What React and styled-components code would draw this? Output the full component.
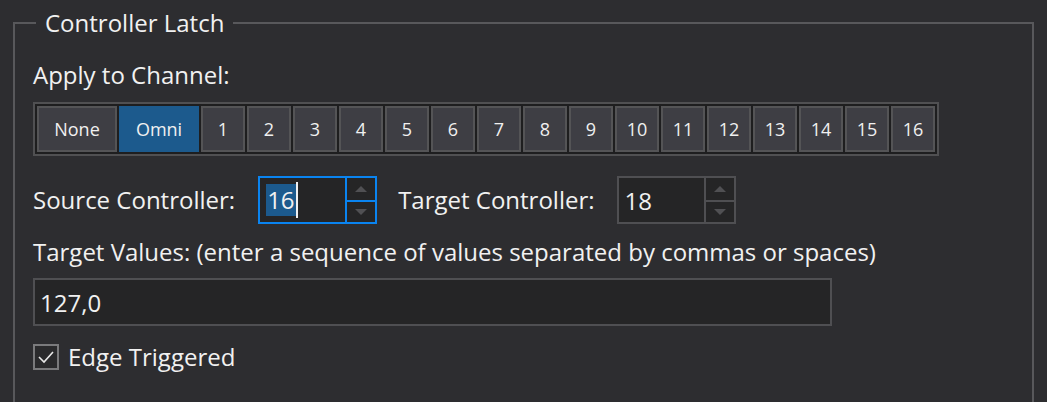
import React from "react";
import styled, { createGlobalStyle } from "styled-components";

const GlobalStyle = createGlobalStyle`
  html, body {
    margin: 0;
    padding: 0;
    background: #2d2d30;
    overflow: hidden;
  }
  body {
    font-family: "Open Sans", "Noto Sans", sans-serif;
    color: #f1f1f1;
  }
`;

const Panel = styled.fieldset`
  margin: 9px 0 0 13px;
  width: 1021px;
  height: 393px;
  box-sizing: border-box;
  border: 2px solid #58585b;
  border-bottom: none;
  padding: 24px 0 0 18px;
  display: flex;
  flex-direction: column;
  align-items: flex-start;
`;

const Legend = styled.legend`
  margin-left: 3px;
  padding: 0 9px;
  font-size: 24px;
  line-height: 28px;
`;

const Label = styled.div`
  font-size: 24px;
  line-height: 28px;
  white-space: nowrap;
  margin-top: ${(p) => p.$top || 0}px;
  margin-left: ${(p) => p.$left || 0}px;
`;

const ChannelGroup = styled.div`
  margin-top: 13px;
  display: flex;
  gap: 2px;
  padding: 2px;
  border: 2px solid #505052;
  background: #1e1e1f;
`;

const ChannelButton = styled.button`
  width: ${(p) => (p.$wide ? 80 : 44)}px;
  height: 46px;
  box-sizing: border-box;
  border: 2px solid ${(p) => (p.$active ? "#1c5a8d" : "#545456")};
  background: ${(p) => (p.$active ? "#1c5a8d" : "#3e3e44")};
  color: #f0f0f0;
  font-family: inherit;
  font-size: 18px;
  padding: 0;
  cursor: pointer;
`;

const Row = styled.div`
  margin-top: 20px;
  display: flex;
  align-items: center;
`;

const Spinner = styled.div`
  margin-left: ${(p) => p.$gap}px;
  width: 119px;
  height: 48px;
  box-sizing: border-box;
  border: 2px solid ${(p) => (p.$focused ? "#0a84f0" : "#4f4f52")};
  background: #252526;
  display: grid;
  grid-template-columns: 1fr 28px;
`;

const SpinValue = styled.div`
  border-right: 2px solid ${(p) => (p.$focused ? "#0a84f0" : "#4f4f52")};
  padding-left: 6px;
  display: flex;
  align-items: center;
  font-size: 24px;
`;

const Selected = styled.span`
  background: #1c5a8d;
  line-height: 32px;
  padding: 0 1px;
`;

const Caret = styled.span`
  width: 2px;
  height: 36px;
  background: #f0f0f0;
`;

const Arrows = styled.div`
  display: grid;
  grid-template-rows: 1fr 1fr;
`;

const Arrow = styled.div`
  display: flex;
  align-items: center;
  justify-content: center;
  border-top: ${(p) =>
    p.$down ? `2px solid ${p.$focused ? "#0a84f0" : "#4f4f52"}` : "none"};
`;

const TextBox = styled.div`
  margin-top: 12px;
  width: 799px;
  height: 48px;
  box-sizing: border-box;
  border: 2px solid #4f4f52;
  background: #252526;
  padding-left: 5px;
  display: flex;
  align-items: center;
  font-size: 24px;
`;

const CheckRow = styled.label`
  margin-top: 18px;
  display: flex;
  align-items: center;
  gap: 9px;
  font-size: 24px;
  line-height: 26px;
`;

const Box = styled.span`
  width: 26px;
  height: 26px;
  box-sizing: border-box;
  border: 2px solid #7a7a7c;
  background: #2a2a2c;
  display: flex;
  align-items: center;
  justify-content: center;
`;

const Triangle = ({ down }) => (
  <svg width="12" height="7" viewBox="0 0 12 7">
    <polygon
      points={down ? "0,0 12,0 6,6" : "6,0 12,6 0,6"}
      fill="#505053"
    />
  </svg>
);

const SpinBox = ({ value, focused, gap }) => (
  <Spinner $focused={focused} $gap={gap}>
    <SpinValue $focused={focused}>
      {focused ? (
        <>
          <Selected>{value}</Selected>
          <Caret />
        </>
      ) : (
        value
      )}
    </SpinValue>
    <Arrows>
      <Arrow>
        <Triangle />
      </Arrow>
      <Arrow $down $focused={focused}>
        <Triangle down />
      </Arrow>
    </Arrows>
  </Spinner>
);

const channels = Array.from({ length: 16 }, (_, i) => String(i + 1));

export default function App() {
  return (
    <>
      <GlobalStyle />
      <Panel>
        <Legend>Controller Latch</Legend>
        <Label>Apply to Channel:</Label>
        <ChannelGroup>
          <ChannelButton $wide>None</ChannelButton>
          <ChannelButton $wide $active>
            Omni
          </ChannelButton>
          {channels.map((c) => (
            <ChannelButton key={c}>{c}</ChannelButton>
          ))}
        </ChannelGroup>
        <Row>
          <Label>Source Controller:</Label>
          <SpinBox value="16" focused gap={23} />
          <Label $left={21}>Target Controller:</Label>
          <SpinBox value="18" gap={22} />
        </Row>
        <Label $top={14}>
          Target Values: (enter a sequence of values separated by commas or
          spaces)
        </Label>
        <TextBox>127,0</TextBox>
        <CheckRow>
          <Box>
            <svg width="18" height="14" viewBox="0 0 18 14">
              <polyline
                points="2,7 7,12 16,2"
                fill="none"
                stroke="#e8e8e8"
                strokeWidth="1.6"
              />
            </svg>
          </Box>
          Edge Triggered
        </CheckRow>
      </Panel>
    </>
  );
}
